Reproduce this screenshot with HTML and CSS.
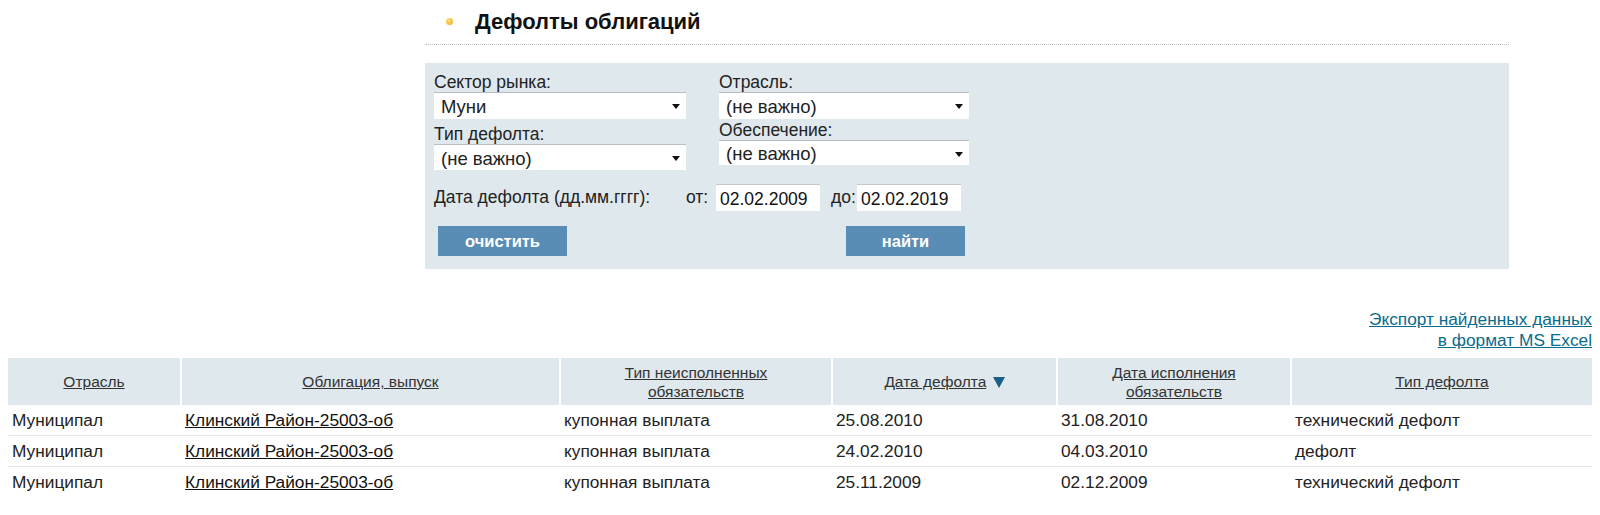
FILE: index.html
```html
<!DOCTYPE html>
<html lang="ru">
<head>
  <meta charset="UTF-8">
  <title>Дефолты облигаций</title>
  <link rel="stylesheet" href="styles.css">
</head>
<body>
  <div class="page">
    <div class="content">
      <!-- Title -->
      <div class="title">
        <span class="bullet"></span>
        <h1>Дефолты облигаций</h1>
      </div>

      <!-- Search form -->
      <form class="filter">
        <div class="filter-cols">
          <div class="col">
            <label>Сектор рынка:</label>
            <div class="select"><span>Муни</span></div>
            <label class="second">Тип дефолта:</label>
            <div class="select low"><span>(не важно)</span></div>
          </div>
          <div class="col right">
            <label>Отрасль:</label>
            <div class="select"><span>(не важно)</span></div>
            <label class="second">Обеспечение:</label>
            <div class="select short"><span>(не важно)</span></div>
          </div>
        </div>

        <div class="date-row">
          <span class="date-label">Дата дефолта (дд.мм.гггг):</span>
          <span class="from">от:</span>
          <input type="text" class="date" value="02.02.2009">
          <span class="to">до:</span>
          <input type="text" class="date" value="02.02.2019">
        </div>

        <div class="buttons">
          <button type="button" class="btn clear">очистить</button>
          <button type="button" class="btn find">найти</button>
        </div>
      </form>
    </div>

    <!-- Export -->
    <div class="export">
      <a href="#">Экспорт найденных данных<br>в формат MS Excel</a>
    </div>

    <!-- Results -->
    <table class="results">
      <colgroup>
        <col style="width:173px">
        <col style="width:379px">
        <col style="width:272px">
        <col style="width:225px">
        <col style="width:234px">
        <col style="width:301px">
      </colgroup>
      <thead>
        <tr>
          <th><a href="#">Отрасль</a></th>
          <th><a href="#">Облигация, выпуск</a></th>
          <th><a href="#">Тип неисполненных<br>обязательств</a></th>
          <th><a href="#">Дата дефолта</a> <span class="sort"></span></th>
          <th><a href="#">Дата исполнения<br>обязательств</a></th>
          <th><a href="#">Тип дефолта</a></th>
        </tr>
      </thead>
      <tbody>
        <tr>
          <td>Муниципал</td>
          <td><a href="#">Клинский Район-25003-об</a></td>
          <td>купонная выплата</td>
          <td>25.08.2010</td>
          <td>31.08.2010</td>
          <td>технический дефолт</td>
        </tr>
        <tr>
          <td>Муниципал</td>
          <td><a href="#">Клинский Район-25003-об</a></td>
          <td>купонная выплата</td>
          <td>24.02.2010</td>
          <td>04.03.2010</td>
          <td>дефолт</td>
        </tr>
        <tr>
          <td>Муниципал</td>
          <td><a href="#">Клинский Район-25003-об</a></td>
          <td>купонная выплата</td>
          <td>25.11.2009</td>
          <td>02.12.2009</td>
          <td>технический дефолт</td>
        </tr>
      </tbody>
    </table>
  </div>
</body>
</html>
```

FILE: styles.css
```css
body {
  margin: 0;
  font-family: 'Liberation Sans', Arial, sans-serif;
  color: #222;
  background: #ffffff;
}

.page {
  padding: 0 8px;
}

.content {
  width: 1084px;
  margin-left: 417px;
}

/* Title */
.title {
  display: flex;
  align-items: center;
  height: 44px;
  border-bottom: 1px dotted #bcbcbc;
}

.bullet {
  width: 7px;
  height: 7px;
  margin-left: 21px;
  margin-right: 22px;
  margin-top: -2px;
  border-radius: 50%;
  background: radial-gradient(circle at 40% 35%, #ffe27a, #f0a01a);
}

.title h1 {
  margin: 0;
  font-size: 22px;
  font-weight: bold;
  color: #111;
}

/* Filter panel */
.filter {
  margin-top: 18px;
  padding: 9px 8px 13px 9px;
  background: #dfe8ed;
  font-size: 17.5px;
  color: #222;
}

.filter-cols {
  display: flex;
  gap: 33px;
}

.col {
  display: flex;
  flex-direction: column;
  width: 252px;
}

.col.right {
  width: 250px;
}

.col label {
  line-height: 20px;
}

.col label.second {
  margin-top: 5px;
}

.col.right label.second {
  margin-top: 1px;
}

.select {
  position: relative;
  height: 27px;
  box-sizing: border-box;
  padding: 2px 6px 0 7px;
  background: #ffffff;
  border-top: 1px solid #b9bec2;
  font-size: 18.5px;
  line-height: 24px;
}

.select.low {
  height: 26px;
}

.select.short {
  height: 25px;
  line-height: 22px;
}

.select::after {
  content: "";
  position: absolute;
  right: 6px;
  top: 11px;
  border-left: 4px solid transparent;
  border-right: 4px solid transparent;
  border-top: 5px solid #111;
}

.date-row {
  display: flex;
  align-items: center;
  margin-top: 14px;
  height: 27px;
}

.date-label {
  width: 252px;
}

.from {
  width: 30px;
}

.to {
  margin-left: 11px;
  width: 26px;
}

.date {
  width: 104px;
  height: 27px;
  box-sizing: border-box;
  padding: 2px 3px 0 4px;
  border: none;
  border-top: 1px solid #c4c8cc;
  background: #ffffff;
  font-family: 'Liberation Sans', Arial, sans-serif;
  font-size: 17.5px;
  color: #111;
}

.buttons {
  display: flex;
  margin-top: 15px;
  padding-left: 4px;
}

.btn {
  height: 30px;
  border: none;
  background: #5a8db5;
  color: #ffffff;
  font-family: 'Liberation Sans', Arial, sans-serif;
  font-size: 16.5px;
  font-weight: bold;
  cursor: pointer;
}

.btn.clear {
  width: 129px;
}

.btn.find {
  width: 119px;
  margin-left: 279px;
}

/* Export link */
.export {
  margin-top: 40px;
  text-align: right;
  font-size: 17.3px;
  line-height: 20.5px;
}

.export a {
  color: #0a6c8c;
}

/* Results table */
.results {
  width: 1584px;
  margin-top: 8px;
  border-collapse: collapse;
  table-layout: fixed;
  font-size: 17.3px;
}

.results th {
  height: 47px;
  padding: 0 4px;
  background: #dfe8ed;
  border-left: 2px solid #ffffff;
  font-size: 15.5px;
  font-weight: normal;
  line-height: 19px;
  text-align: center;
  vertical-align: middle;
}

.results th:first-child {
  border-left: none;
}

.results th a {
  color: #333;
}

.sort {
  display: inline-block;
  width: 0;
  height: 0;
  margin-left: 2px;
  border-left: 6px solid transparent;
  border-right: 6px solid transparent;
  border-top: 11px solid #1a5d85;
  vertical-align: -1px;
}

.results td {
  height: 30px;
  padding: 0 4px;
  border-bottom: 1px solid #e2e4e6;
  color: #222;
  white-space: nowrap;
}

.results tbody tr:last-child td {
  border-bottom: none;
}

.results td a {
  color: #111;
}
```
